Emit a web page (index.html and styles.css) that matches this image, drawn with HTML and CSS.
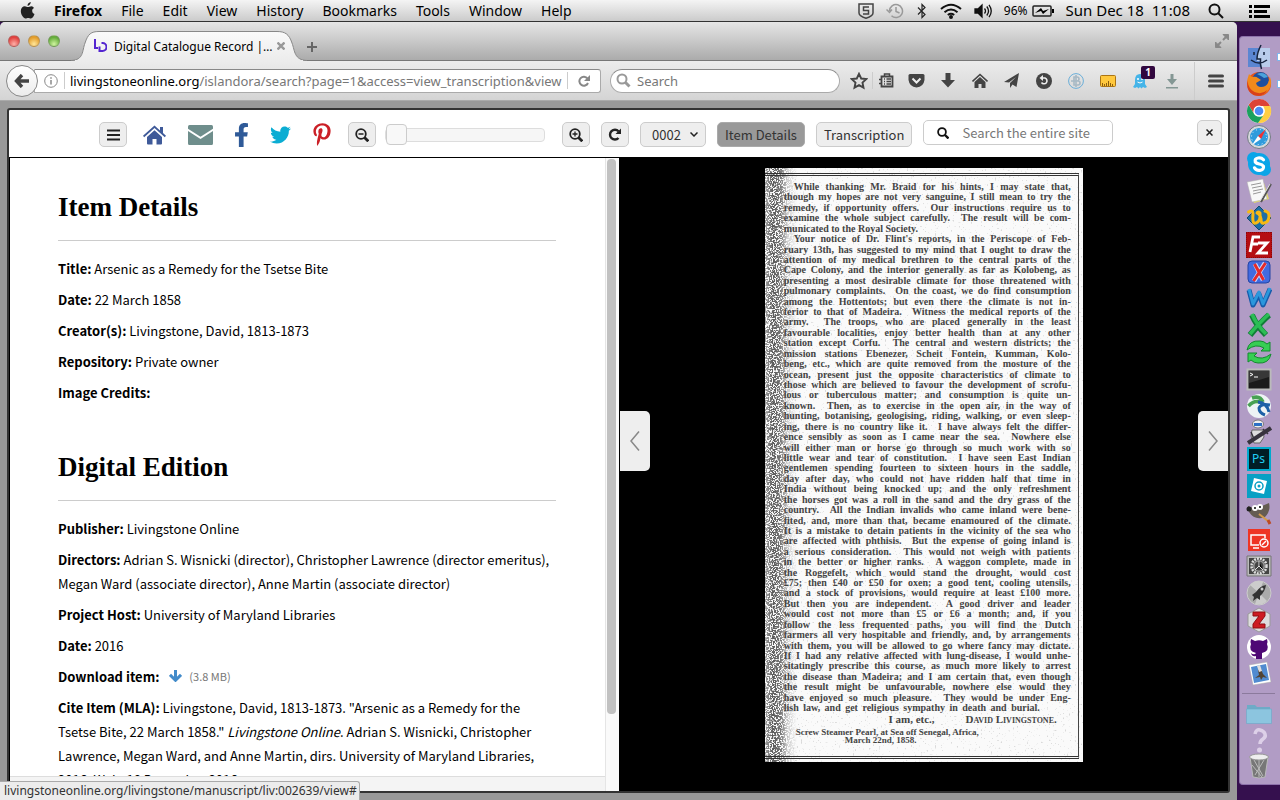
FILE: index.html
```html
<!DOCTYPE html>
<html lang="en">
<head>
<meta charset="utf-8">
<title>Digital Catalogue Record | Livingstone Online</title>
<link rel="stylesheet" href="styles.css">
</head>
<body>
<header class="menubar">
  <svg class="apple" viewBox="0 0 16 18" width="16" height="18"><path fill="#222" d="M10.8 0c.1 1.800-1.600 3.900-3.300 3.800C7.300 2 9.100.2 10.800 0zM13.900 6c-1.300.8-1.800 1.800-1.700 3 .1 1.500.9 2.500 2.300 3.100-.6 1.800-2 4.400-3.600 4.400-1 0-1.500-.6-2.700-.6s-1.800.6-2.700.6C3.500 16.500.8 12.500.8 9c0-3 2-4.700 4-4.700 1.300 0 2.300.8 3.200.8.8 0 2-.9 3.500-.9 1 .1 1.900.5 2.400 1.800z"/></svg>
  <nav class="menus">
    <a href="#" class="app">Firefox</a><a href="#">File</a><a href="#">Edit</a><a href="#">View</a><a href="#">History</a><a href="#">Bookmarks</a><a href="#">Tools</a><a href="#">Window</a><a href="#">Help</a>
  </nav>
  <div class="tray">
    <svg width="16" height="16" viewBox="0 0 16 16" fill="none" stroke="#444" stroke-width="1.500"><path d="M1 1h14v9q0 3-7 5.200Q1 13 1 10zM11 4H5.500v3.500h5V11H5"/></svg>
    <svg width="18" height="16" viewBox="0 0 18 16" fill="none" stroke="#999" stroke-width="1.500"><path d="M3.500 8a6.500 6.500 0 1 1 2 4.800M.5 6.500l3 3 2.500-3M10 4v4.500l3.500 1.500"/></svg>
    <svg width="12" height="16" viewBox="0 0 12 16" fill="none" stroke="#222" stroke-width="1.200"><path d="M2 4.500l7 7L6 14.500v-13l3 3-7 7"/></svg>
    <svg width="22" height="16" viewBox="0 0 22 16" fill="none" stroke="#111" stroke-width="2"><path d="M1 6q10-8.500 20 0M4.500 9.200q6.500-5.400 13 0M7.800 12q3.200-2.500 6.400 0"/><circle cx="11" cy="14" r="1" fill="#111"/></svg>
    <svg width="18" height="16" viewBox="0 0 18 16" fill="none" stroke="#111" stroke-width="1.300"><path fill="#111" d="M1 6h3l4-4v12l-4-4H1z"/><path d="M10.500 5.500q2 2.500 0 5M12.800 3.500q3.500 4.500 0 9M15 1.800q4.500 6.200 0 12.400"/></svg>
    <span class="charge">96%</span>
    <svg width="22" height="14" viewBox="0 0 22 14"><rect x="1" y="2" width="18" height="10" rx="1" fill="none" stroke="#222" stroke-width="1.500"/><path d="M20 5h2v4h-2z"/><path d="M3 9l6-5 2 3 6-2-6 5-2-3z"/></svg>
    <time class="clock">Sun Dec 18&nbsp; 11:08</time>
    <svg class="spot" width="16" height="16" viewBox="0 0 16 16" fill="none" stroke="#111" stroke-width="2"><circle cx="6.500" cy="6.500" r="5"/><path d="M10 10l5 5"/></svg>
    <svg width="21" height="14" viewBox="0 0 21 14"><path d="M0 1h3v3H0zM5 1h16v3H5zM0 6h3v3H0zM5 6h13v3H5zM0 11h3v3H0zM5 11h16v3H5z"/></svg>
  </div>
</header>

<div class="desktop">
<section class="window">
  <div class="titlebar">
    <div class="lights"><i class="red"></i><i class="amber"></i><i class="green"></i></div>
    <div class="tab">
      <svg class="tabshape" width="236" height="30" viewBox="0 0 236 30"><defs><linearGradient id="tb" x2="0" y2="1"><stop stop-color="#fafafa"/><stop offset="1" stop-color="#ececec"/></linearGradient></defs><path fill="url(#tb)" stroke="#888" d="M0 29.500C13 29 11 20 14 12 17 3 20 .5 28 .5H206C214 .5 218 3 221 12 224 20 223 29 236 29.500"/><path stroke="#ececec" stroke-width="2" d="M4 30H232"/></svg>
      <svg class="logo" width="14" height="14" viewBox="0 0 14 14" fill="none" stroke="#5426d0" stroke-width="2"><path d="M2 0v9h3M8.500 4h1a3.500 3.500 0 0 1 0 8H6.500V7.500"/></svg>
      <span class="tabtitle">Digital Catalogue Record |…</span>
      <button class="plain" aria-label="Close tab"><svg width="8" height="8" viewBox="0 0 8 8" stroke="#999" stroke-width="2.400"><path d="M.5.5l7 7M7.500.5l-7 7"/></svg></button>
    </div>
    <button class="plain newtab" aria-label="New tab"><svg width="10" height="10" viewBox="0 0 10 10" stroke="#666" stroke-width="2"><path d="M5 0v10M0 5h10"/></svg></button>
    <svg class="expand" width="14" height="14" viewBox="0 0 14 14" fill="#888" stroke="#888"><path d="M8 .5h5.500V6zM.5 8v5.500H6z"/><path stroke-width="2" d="M8 6l4-4M6 8l-4 4"/></svg>
  </div>

  <div class="toolbar">
    <button class="back" aria-label="Back"><svg width="16" height="14" viewBox="0 0 16 14" fill="none" stroke="#444" stroke-width="3.400"><path d="M8 1L2.500 7 8 13M3 7h12"/></svg></button>
    <div class="urlbox">
      <svg width="14" height="14" viewBox="0 0 14 14" fill="none" stroke="#888"><circle cx="7" cy="7" r="6.300"/><path stroke-width="1.500" d="M7 6v4.500M7 3.200v1.500"/></svg>
      <i class="sep"></i>
      <div class="url"><b>livingstoneonline.org</b>/islandora/search?page=1&amp;access=view_transcription&amp;view</div>
      <i class="sep"></i>
      <button class="plain reload" aria-label="Reload"><svg width="12" height="12" viewBox="0 0 12 12" fill="none" stroke="#888" stroke-width="2"><path d="M9.500 3.500A4.500 4.500 0 1 0 10 8"/><path fill="#888" stroke="none" d="M12 0v6H6z"/></svg></button>
    </div>
    <label class="searchbox"><svg width="15" height="15" viewBox="0 0 15 15" fill="none" stroke="#999" stroke-width="2"><circle cx="6" cy="6" r="4.500"/><path stroke-width="3" d="M9.500 9.500l4 4"/></svg><input type="text" placeholder="Search" aria-label="Search"></label>
    <div class="tools">
      <button class="plain star" aria-label="Bookmark"><svg width="18" height="18" viewBox="0 0 18 18" fill="none" stroke="#444" stroke-width="1.900"><path d="M9 1.800l2.200 4.700 5 .6-3.700 3.500 1 5.100L9 13.200l-4.500 2.500 1-5.100L1.800 7.100l5-.6z"/></svg></button>
      <i class="sep"></i>
      <button class="plain list" aria-label="Bookmarks"><svg width="15" height="15" viewBox="0 0 15 15" fill="none" stroke="#444"><path stroke-width="1.800" d="M2.500 3.500h11v10h-11z"/><path stroke-width="1.500" d="M5.500 3V1h5v2M0 6.500h3M0 10.500h3M5 6h1M7.500 6H12M5 8.500h1M7.500 8.500H12M5 11h1M7.500 11H12"/></svg></button>
      <button class="plain" aria-label="Pocket"><svg width="17" height="16" viewBox="0 0 17 16"><path fill="#444" d="M2 1h13q1.500 0 1.500 1.500V7q-1 7-8 7.500Q1.500 14 .5 7V2.500Q.5 1 2 1z"/><path d="M4.500 5.500l4 4 4-4" fill="none" stroke="#eee" stroke-width="2"/></svg></button>
      <button class="plain" aria-label="Downloads"><svg width="14" height="15" viewBox="0 0 14 15"><path fill="#444" d="M4.500 0h5v7H14l-7 7.500L0 7h4.500z"/></svg></button>
      <button class="plain" aria-label="Home"><svg width="16" height="16" viewBox="0 0 16 16"><path fill="#444" d="M8 4l5.500 5v6H9.500v-4h-3v4h-4V9z"/><path fill="none" stroke="#444" stroke-width="1.600" d="M.5 8.500L8 1.500l7.500 7"/></svg></button>
      <button class="plain" aria-label="Share"><svg width="16" height="16" viewBox="0 0 16 16"><path fill="#444" d="M15 0l-2.500 14-4-2.500L6 15v-5l6-6-7 5.500L0 9z"/></svg></button>
      <button class="plain" aria-label="History"><svg width="16" height="16" viewBox="0 0 16 16"><circle cx="8" cy="8" r="8" fill="#444"/><path fill="none" stroke="#eee" stroke-width="1.600" d="M5.500 5H9a3 3 0 1 1-3.500 4.500"/><path fill="#eee" d="M3.500 5L7 2v6z"/></svg></button>
      <button class="plain" aria-label="Translate"><svg width="16" height="16" viewBox="0 0 16 16" fill="none" stroke="#6aaed8"><circle cx="8" cy="8" r="7.400"/><path stroke="#a7b9c5" stroke-width="1.600" d="M6 4h3q2 0 2 2T9 8H3h7q2 0 2 2t-2 2H6zM8 2v12"/></svg></button>
      <button class="plain" aria-label="Ruler"><svg width="16" height="12" viewBox="0 0 16 12"><rect x=".5" y=".5" width="15" height="11" rx="1" fill="#ffc83d" stroke="#ab7414"/><path stroke="#8c5d0d" d="M2.500 11V8M4.500 11V9M6.500 11V8M8.500 11V6M10.500 11V8M12.500 11V9"/></svg></button>
      <button class="plain ghost" aria-label="Ghostery"><svg width="14" height="16" viewBox="0 0 14 16"><path fill="#45b4e8" d="M7 1q5 0 5 6v4l2 3-2 1-2-1-1.500 1.500L7 14l-1.500 1.500L4 14l-2 1-2-1 2-3V7q0-6 5-6z"/><circle cx="5" cy="6" r="1" fill="#fff"/><circle cx="9" cy="6" r="1" fill="#fff"/><path d="M4.500 9q2.500 2 5 0" stroke="#fff" fill="none"/></svg><span class="badge">1</span></button>
      <button class="plain" aria-label="Save"><svg width="14" height="16" viewBox="0 0 14 16"><path fill="#849794" d="M5.500 1h3v5H12l-5 6-5-6h3.500zM1 14h12v1.500H1z"/></svg></button>
      <i class="sep end"></i>
      <button class="plain burger" aria-label="Menu"><svg width="16" height="14" viewBox="0 0 16 14" stroke="#444" stroke-width="3" stroke-linecap="round"><path d="M1.500 2h13M1.500 7h13M1.500 12h13"/></svg></button>
    </div>
  </div>

  <div class="viewport">
  <main class="viewer">
    <div class="controls">
      <button class="btn" aria-label="Menu"><svg width="13" height="12" viewBox="0 0 13 12" stroke="#222" stroke-width="2"><path d="M0 1.500h13M0 6h13M0 10.500h13"/></svg></button>
      <div class="social">
        <a href="#" aria-label="Home"><svg width="23" height="20" viewBox="0 0 23 20" fill="#3f5a99"><path d="M11.500 5.200L4 12v6.500q0 1 1 1h4.500V14h4v5.500H18q1 0 1-1V12z"/><path d="M11.500.5L17 5.500V2h3v6l3 2.800-1.200 1.400L11.500 3 1.200 12.200 0 10.800z"/></svg></a>
        <a href="#" aria-label="Email"><svg width="25" height="20" viewBox="0 0 25 20" fill="#6f8e8c"><path d="M1.500 0h22Q25 0 25 1.500v2.200l-12.500 8L0 3.700V1.500Q0 0 1.500 0z"/><path d="M0 6l12.500 8L25 6v12.500q0 1.500-1.500 1.500h-22Q0 20 0 18.500z"/></svg></a>
        <a href="#" aria-label="Facebook"><svg width="13" height="24" viewBox="22 0 276 512" preserveAspectRatio="none"><path fill="#2f5a98" d="M279.140 288l14.220-92.660h-88.910v-60.130c0-25.350 12.420-50.060 52.240-50.060h40.420V6.260S260.430 0 225.360 0c-73.220 0-121.080 44.380-121.080 124.720v70.620H22.890V288h81.390v224h100.170V288z"/></svg></a>
        <a href="#" aria-label="Twitter"><svg width="21" height="20" viewBox="0 40 512 432"><path fill="#0badd3" d="M459.370 151.716c.325 4.548.325 9.097.325 13.645 0 138.720-105.583 298.558-298.558 298.558-59.452 0-114.680-17.219-161.137-47.106 8.447.974 16.568 1.299 25.340 1.299 49.055 0 94.213-16.568 130.274-44.832-46.132-.975-84.792-31.188-98.112-72.772 6.498.974 12.995 1.624 19.818 1.624 9.421 0 18.843-1.300 27.614-3.573-48.081-9.747-84.143-51.980-84.143-102.985v-1.299c13.969 7.797 30.214 12.670 47.431 13.319-28.264-18.843-46.781-51.005-46.781-87.391 0-19.492 5.197-37.360 14.294-52.954 51.655 63.675 129.300 105.258 216.365 109.807-1.624-7.797-2.599-15.918-2.599-24.040 0-57.828 46.782-104.934 104.934-104.934 30.213 0 57.502 12.670 76.670 33.137 23.715-4.548 46.456-13.320 66.599-25.340-7.798 24.366-24.366 44.833-46.132 57.827 21.117-2.273 41.584-8.122 60.426-16.243-14.292 20.791-32.161 39.308-52.628 54.253z"/></svg></a>
        <a href="#" aria-label="Pinterest"><svg width="18" height="23" viewBox="0 0 384 512"><path fill="#cb2027" d="M204 6.500C101.400 6.500 0 74.900 0 185.600 0 256 39.600 296 63.600 296c9.900 0 15.600-27.600 15.600-35.400 0-9.300-23.700-29.100-23.700-67.800 0-80.400 61.200-137.400 140.400-137.400 68.100 0 118.500 38.700 118.500 109.800 0 53.100-21.300 152.700-90.300 152.700-24.900 0-46.200-18-46.200-43.800 0-37.800 26.400-74.400 26.400-113.400 0-66.200-93.900-54.200-93.900 25.800 0 16.800 2.100 35.400 9.600 50.700-13.800 59.400-42 147.900-42 209.100 0 18.900 2.700 37.500 4.500 56.400 3.400 3.800 1.700 3.400 6.900 1.500 50.400-69 48.600-82.500 71.400-172.800 12.300 23.400 44.100 36 69.300 36 106.200 0 153.900-103.500 153.900-196.800C384 71.300 298.200 6.500 204 6.500z"/></svg></a>
      </div>
      <div class="zoomer">
        <button class="btn" aria-label="Zoom out"><svg width="14" height="14" viewBox="0 0 14 14" fill="none" stroke="#222" stroke-width="1.800"><circle cx="6" cy="6" r="4.800"/><path stroke-width="2.800" d="M9.500 9.500l3.800 3.800"/><path stroke-width="1.300" d="M3.500 6h5"/></svg></button>
        <input class="slider" type="range" min="0" max="100" value="0" aria-label="Zoom level">
      </div>
      <div class="pager">
        <button class="btn" aria-label="Zoom in"><svg width="14" height="14" viewBox="0 0 14 14" fill="none" stroke="#222" stroke-width="1.800"><circle cx="6" cy="6" r="4.800"/><path stroke-width="2.800" d="M9.500 9.500l3.800 3.800"/><path stroke-width="1.300" d="M3.500 6h5M6 3.500v5"/></svg></button>
        <button class="btn" aria-label="Rotate"><svg width="14" height="13" viewBox="0 0 14 13" fill="none" stroke="#222" stroke-width="2.400"><path d="M10.500 3.300A4.900 4.900 0 1 0 10.500 10"/><path fill="#222" stroke="none" d="M13 .5v5.500H7.500z"/></svg></button>
        <div class="pick"><select aria-label="Page"><option>0002</option></select><svg width="8" height="5" viewBox="0 0 8 5" fill="none" stroke="#222" stroke-width="1.500"><path d="M.5.5L4 4 7.500.5"/></svg></div>
        <button class="btn word on">Item Details</button>
        <button class="btn word">Transcription</button>
      </div>
      <label class="sitesearch"><svg width="12" height="12" viewBox="0 0 12 12" fill="none" stroke="#111" stroke-width="1.800"><circle cx="5" cy="5" r="3.900"/><path stroke-width="2.400" d="M8 8l3.500 3.500"/></svg><input type="text" placeholder="Search the entire site" aria-label="Search the entire site"></label>
      <button class="btn close" aria-label="Close"><svg width="7" height="7" viewBox="0 0 7 7" stroke="#222" stroke-width="1.500"><path d="M.5.5l6 6M6.500.5l-6 6"/></svg></button>
    </div>
    <div class="panes">
      <div class="details">
        <div class="scroller">
          <section>
            <h2>Item Details</h2>
            <p><b>Title:</b> Arsenic as a Remedy for the Tsetse Bite</p>
            <p><b>Date:</b> 22 March 1858</p>
            <p><b>Creator(s):</b> Livingstone, David, 1813-1873</p>
            <p><b>Repository:</b> Private owner</p>
            <p><b>Image Credits:</b></p>
          </section>
          <section>
            <h2>Digital Edition</h2>
            <p><b>Publisher:</b> Livingstone Online</p>
            <p><b>Directors:</b> Adrian S. Wisnicki (director), Christopher Lawrence (director emeritus), Megan Ward (associate director), Anne Martin (associate director)</p>
            <p><b>Project Host:</b> University of Maryland Libraries</p>
            <p><b>Date:</b> 2016</p>
            <p><b>Download item:</b> <a class="dl" href="#"><svg width="13" height="12" viewBox="0 0 13 12" fill="none" stroke="#428bca" stroke-width="3"><path d="M6.500 0v10M1 4.800l5.500 5.500L12 4.800"/></svg><span>(3.8 MB)</span></a></p>
            <p><b>Cite Item (MLA):</b> Livingstone, David, 1813-1873. "Arsenic as a Remedy for the Tsetse Bite, 22 March 1858." <em>Livingstone Online</em>. Adrian S. Wisnicki, Christopher Lawrence, Megan Ward, and Anne Martin, dirs. University of Maryland Libraries, 2016. Web. 18 December 2016.</p>
          </section>
        </div>
        <div class="track"><i></i></div>
      </div>
      <div class="stage">
        <button class="turn prev" aria-label="Previous page"><svg width="10" height="20" viewBox="0 0 10 20" fill="none" stroke="#888" stroke-width="1.500"><path d="M9 .5L1 10l8 9.500"/></svg></button>
        <article class="scan">
          <svg class="grain" aria-hidden="true"><defs>
            <filter id="speck" x="0" y="0" width="1" height="1"><feTurbulence type="fractalNoise" baseFrequency=".7" numOctaves="2" seed="4"/><feColorMatrix values="0 0 0 0 .1  0 0 0 0 .1  0 0 0 0 .1  10 0 0 0 -4.200"/></filter>
            <filter id="dust" x="0" y="0" width="1" height="1"><feTurbulence type="fractalNoise" baseFrequency=".5" numOctaves="2" seed="9"/><feColorMatrix values="0 0 0 0 .4  0 0 0 0 .4  0 0 0 0 .4  10 0 0 0 -6.600"/></filter>
            <linearGradient id="fade"><stop stop-color="#888"/><stop offset=".25" stop-color="#fff"/><stop offset=".5" stop-color="#ccc"/><stop offset=".7" stop-color="#444"/><stop offset="1" stop-color="#000"/></linearGradient>
            <mask id="edge" maskUnits="userSpaceOnUse" x="0" y="0" width="32" height="2000"><rect width="32" height="2000" fill="url(#fade)"/></mask>
          </defs>
            <rect width="100%" height="100%" filter="url(#dust)" opacity=".4"/>
            <g mask="url(#edge)"><rect width="32" height="100%" filter="url(#speck)"/></g>
          </svg>
          <div class="print">
            <p class="in">While thanking Mr. Braid for his hints, I may state that,</p>
            <p>though my hopes are not very sanguine, I still mean to try the</p>
            <p>remedy, if opportunity offers. &nbsp;Our instructions require us to</p>
            <p>examine the whole subject carefully. &nbsp;The result will be com-</p>
            <p class="short">municated to the Royal Society.</p>
            <p class="in">Your notice of Dr. Flint's reports, in the Periscope of Feb-</p>
            <p>ruary 13th, has suggested to my mind that I ought to draw the</p>
            <p>attention of my medical brethren to the central parts of the</p>
            <p>Cape Colony, and the interior generally as far as Kolobeng, as</p>
            <p>presenting a most desirable climate for those threatened with</p>
            <p>pulmonary complaints. &nbsp;On the coast, we do find consumption</p>
            <p>among the Hottentots; but even there the climate is not in-</p>
            <p>ferior to that of Madeira. &nbsp;Witness the medical reports of the</p>
            <p>army. &nbsp;The troops, who are placed generally in the least</p>
            <p>favourable localities, enjoy better health than at any other</p>
            <p>station except Corfu. &nbsp;The central and western districts; the</p>
            <p>mission stations Ebenezer, Scheit Fontein, Kumman, Kolo-</p>
            <p>beng, etc., which are quite removed from the mosture of the</p>
            <p>ocean, present just the opposite characteristics of climate to</p>
            <p>those which are believed to favour the development of scrofu-</p>
            <p>lous or tuberculous matter; and consumption is quite un-</p>
            <p>known. &nbsp;Then, as to exercise in the open air, in the way of</p>
            <p>hunting, botanising, geologising, riding, walking, or even sleep-</p>
            <p>ing, there is no country like it. &nbsp;I have always felt the differ-</p>
            <p>ence sensibly as soon as I came near the sea. &nbsp;Nowhere else</p>
            <p>will either man or horse go through so much work with so</p>
            <p>little wear and tear of constitution. &nbsp;I have seen East Indian</p>
            <p>gentlemen spending fourteen to sixteen hours in the saddle,</p>
            <p>day after day, who could not have ridden half that time in</p>
            <p>India without being knocked up; and the only refreshment</p>
            <p>the horses got was a roll in the sand and the dry grass of the</p>
            <p>country. &nbsp;All the Indian invalids who came inland were bene-</p>
            <p>fited, and, more than that, became enamoured of the climate.</p>
            <p>It is a mistake to detain patients in the vicinity of the sea who</p>
            <p>are affected with phthisis. &nbsp;But the expense of going inland is</p>
            <p>a serious consideration. &nbsp;This would not weigh with patients</p>
            <p>in the better or higher ranks. &nbsp;A waggon complete, made in</p>
            <p>the Roggefelt, which would stand the drought, would cost</p>
            <p>£75; then £40 or £50 for oxen; a good tent, cooling utensils,</p>
            <p>and a stock of provisions, would require at least £100 more.</p>
            <p>But then you are independent. &nbsp;A good driver and leader</p>
            <p>would cost not more than £5 or £6 a month; and, if you</p>
            <p>follow the less frequented paths, you will find the Dutch</p>
            <p>farmers all very hospitable and friendly, and, by arrangements</p>
            <p>with them, you will be allowed to go where fancy may dictate.</p>
            <p>If I had any relative affected with lung-disease, I would unhe-</p>
            <p>sitatingly prescribe this course, as much more likely to arrest</p>
            <p>the disease than Madeira; and I am certain that, even though</p>
            <p>the result might be unfavourable, nowhere else would they</p>
            <p>have enjoyed so much pleasure. &nbsp;They would be under Eng-</p>
            <p class="short wide">lish law, and get religious sympathy in death and burial.</p>
            <p class="sign"><span>I am, etc.,</span><span class="caps">David Livingstone.</span></p>
            <p class="place">Screw Steamer Pearl, at Sea off Senegal, Africa,</p>
            <p class="date">March 22nd, 1858.</p>
          </div>
        </article>
        <button class="turn next" aria-label="Next page"><svg width="10" height="20" viewBox="0 0 10 20" fill="none" stroke="#888" stroke-width="1.500"><path d="M1 .5L9 10l-8 9.500"/></svg></button>
      </div>
    </div>
  </main>
  </div>
  <div class="status">livingstoneonline.org/livingstone/manuscript/liv:002639/view#</div>
</section>

<aside class="dock">
  <div class="apps">
    <svg viewBox="0 0 26 26"><rect x="2" y="4" width="22" height="19" fill="#5b86d2"/><path fill="#b9cdec" d="M14 4h10v19H15l-1-6h-3q0-8 3-13z"/><path fill="none" stroke="#16243f" stroke-width="1.500" d="M15 1q-4 8-4 14h3.500q-.5 6 1 10M5 16q8 6 16 0M8 8v3M18 8v3"/></svg>
    <svg viewBox="0 0 26 26"><circle cx="13" cy="13" r="12" fill="#e8541a"/><circle cx="14.500" cy="9.500" r="8.500" fill="#1d4f9f"/><path fill="#4aa2dc" d="M11 3q7-3 11 3l-4 1-3-2z"/><path fill="#f08a1c" d="M1.500 8L3 3l3 3q4-1 6 1l3 2-5 3q1 4 5 4 5 0 7-4l2-6q3 8-2 14-6 6-14 3Q0 19 1.500 8z"/><path fill="#d9401a" d="M1.500 10q1 8 7 11 7 3 13-2-5 8-14 5Q0 20 1.500 10z"/></svg>
    <svg viewBox="0 0 26 26"><circle cx="13" cy="13" r="12" fill="#fff"/><path fill="#dd4336" d="M2.600 7A12 12 0 0 1 24 8H13a6 6 0 0 0-5.500 7z"/><path fill="#ffce43" d="M24 8a12 12 0 0 1-12 17l6-9q2-4-1-8z"/><path fill="#1aa15e" d="M2.600 7A12 12 0 0 0 12 25l5-7q-7 2-9.500-3z"/><circle cx="13" cy="13" r="5.500" fill="#fff"/><circle cx="13" cy="13" r="4.300" fill="#4c8bf5"/></svg>
    <svg viewBox="0 0 26 26"><circle cx="13" cy="13" r="11.500" fill="#d5d8dc" stroke="#737b83"/><circle cx="13" cy="13" r="9" fill="#2f9bdc"/><circle cx="13" cy="13" r="7.500" fill="none" stroke="#e5f3fc" stroke-dasharray="1 3"/><path fill="#e33" d="M20 5l-5 10-3-3z"/><path fill="#fff" d="M6 21l6-9 3 3z"/></svg>
    <svg viewBox="0 0 26 26"><g fill="#0aa5e8"><circle cx="13" cy="13" r="11"/><circle cx="7.500" cy="7.500" r="6.500"/><circle cx="18.500" cy="18.500" r="6.500"/></g><path fill="none" stroke="#fff" stroke-width="3.200" stroke-linecap="round" d="M17.500 8.800Q15.500 6.500 12 7T9.300 11q1 1.500 4 2t4.200 2.300q.5 3.500-3.500 4t-5.500-2.500"/></svg>
    <svg viewBox="0 0 26 26"><path fill="#e5dc68" d="M3 9l15-4 5 16-15 4z"/><path fill="#f8f8f8" stroke="#aaa" stroke-width=".5" d="M1 4l16-3 4 20-15 3z"/><path stroke="#999" d="M5 7l10-2M6 10l10-2M7 13l10-2M7 16l8-2"/><path stroke="#555" stroke-width="2" d="M25 6L15 24"/><path stroke="#ddd" d="M24 6L14 23"/></svg>
    <svg viewBox="0 0 26 26"><path fill="#1d6fa5" stroke="#124a70" d="M13 1l12 12-12 12L1 13z"/><path fill="none" stroke="#f6b914" stroke-width="3" stroke-linecap="round" stroke-linejoin="round" d="M2.500 7Q7 4 7 9q-1 11 3 9 5-2 4-10-2-2-3 0 3 1 4 6 0 5 3 4 5-1 5-7 0-4-4-5"/></svg>
    <svg viewBox="0 0 26 26"><rect x="0" y="0" width="26" height="26" fill="#b50d12" stroke="#650000" stroke-dasharray="1 1"/><path fill="none" stroke="#fff" stroke-width="2.800" d="M14 5H7L4 20M5.500 12H12M12 11h9l-9 10h10"/></svg>
    <svg viewBox="0 0 26 26"><rect x="2" y="2" width="22" height="22" rx="4" fill="#416be0" stroke="#2445a4"/><path stroke="#c9d8ff" stroke-width="4.500" d="M9 5l8 16M19 4L8 22"/><path stroke="#e52a2a" stroke-width="3" d="M8.500 5l9 16M19.500 4L7.500 22"/></svg>
    <svg viewBox="0 0 26 26"><path fill="none" stroke="#155baa" stroke-width="5" stroke-linejoin="round" d="M3 5l4 15 6-11 4 11 7-16"/><path fill="none" stroke="#2b97dc" stroke-width="3" stroke-linejoin="round" d="M3 4l4 15 6-12 4 12 7-16"/></svg>
    <svg viewBox="0 0 26 26" fill="none"><path stroke="#117e38" stroke-width="6" d="M6 3q4 10 14 20M23 3Q15 10 4 23"/><path stroke="#2cbd55" stroke-width="3.500" d="M6 2q4 10 14 20M23 2Q15 9 4 22"/></svg>
    <svg viewBox="0 0 26 26" fill="#37ce53" stroke="#138b2f"><path d="M1 11Q3 1 14 2q4 0 7 3l3-2v9h-9l3-3q-8-5-17 2zM25 15q-2 10-13 9-4 0-7-3l-3 2v-9h9l-3 3q8 5 17-2z"/></svg>
    <svg viewBox="0 0 26 26"><rect x="1.500" y="3.500" width="23" height="20" fill="#1b1b1b" stroke="#bbb" stroke-width="2"/><path fill="#383838" d="M3 5h20v6L3 17z"/><path fill="none" stroke="#fff" d="M4 7l3 1.500L4 10M8 11h4"/></svg>
    <svg viewBox="0 0 26 26"><circle cx="13" cy="13" r="12" fill="#eef3f5"/><path fill="none" stroke="#48a153" stroke-width="3.500" d="M2.500 13Q8 7 14 9M6 5q8-3 11 4"/><path fill="none" stroke="#1d60a7" stroke-width="3" d="M12 9q9 1 11 10M24 12q-9-2-11 3 0 5 6 7"/></svg>
    <svg viewBox="0 0 26 26"><ellipse cx="12" cy="5" rx="5.500" ry="4" fill="#eee" stroke="#777"/><path fill="#2d70c4" d="M8 4h8v3H8z"/><path fill="#ddd" stroke="#666" d="M6 11h11l1 7-4 6H8l-3-7z"/><path stroke="#37333d" stroke-width="4" d="M2 24L25 9"/><path stroke="#37333d" stroke-width="1.500" d="M5 13l3 7M17 10l5 5"/></svg>
    <svg viewBox="0 0 26 26"><rect x="2" y="2" width="22" height="22" fill="#001d26" stroke="#00aacd" stroke-width="2"/><text x="6" y="17" class="ps">Ps</text></svg>
    <svg viewBox="0 0 26 26"><path fill="#07a0c4" d="M1 1h24v24H1z"/><path fill="#fff" d="M8 5l13 3-3 13-13-3z"/><circle cx="13" cy="13" r="4" fill="none" stroke="#07a0c4" stroke-width="1.500"/><circle cx="13" cy="13" r="1.500" fill="#07a0c4"/></svg>
    <svg viewBox="0 0 26 26"><path fill="#655c52" d="M2 6q8 4 14 0l7-3q2 8-4 14-10 4-16-5z"/><circle cx="9" cy="8" r="3" fill="#fff"/><circle cx="14" cy="7" r="3" fill="#fff"/><circle cx="9" cy="8" r="1"/><circle cx="14" cy="7" r="1"/><circle cx="3" cy="9" r="2.500" fill="#222"/><path stroke="#d39b4b" stroke-width="2" d="M13 14l9 7"/><path stroke="#bd4b24" stroke-width="3" d="M22 20l2 4"/></svg>
    <svg viewBox="0 0 26 26" fill="none" stroke="#fff" stroke-width="1.500"><path fill="#ee3524" stroke="none" d="M2 2h22v22H2z"/><path d="M13 18H5V8h14v3M7 21h6"/><circle cx="18" cy="16" r="4"/><path d="M16 18l4-4"/></svg>
    <svg viewBox="0 0 26 26"><path fill="#bbb" stroke="#777" d="M1 3h24v20H1z"/><path fill="#444" d="M3 5h20v16H3z"/><circle cx="13" cy="13" r="7.500" fill="none" stroke="#ddd" stroke-width="2.500" stroke-dasharray="2 1"/><circle cx="13" cy="13" r="6" fill="#999"/><circle cx="13" cy="13" r="4.500" fill="#444"/><path stroke="#ddd" d="M13 8v5l4 4M13 13l-4 4"/></svg>
    <svg viewBox="0 0 26 26"><circle cx="13" cy="13" r="12" fill="#aaa" stroke="#ccc"/><path fill="#ccc" d="M13 13L4 5q6-6 13-3zM13 13l8 8q-5 5-12 3z"/><path fill="#333" d="M20 5q-1 7-6 11v4l-3-2-4 3 1-4-2-2 4-3q4-6 10-7z"/><circle cx="16" cy="9" r="1.500" fill="#ccc"/></svg>
    <svg viewBox="0 0 26 26"><path fill="#ddd" stroke="#999" d="M13 1l11 6v12l-11 6-11-6V7z"/><path fill="#cd1c22" stroke="#8f0e12" d="M7 5h12v4l-6 8h6v4H7v-4l6-8H7z"/></svg>
    <svg viewBox="0 0 26 26"><circle cx="13" cy="13" r="12" fill="#fff"/><path fill="#4e0875" d="M5 5l4 2q4-1.500 8 0l4-2q1 3 0 5 3 7-5 9v6h-6v-3q-4 1-5-3 2 2 4 1l1-1q-8-2-5-9-1-2 0-5z"/></svg>
    <svg viewBox="0 0 26 26"><path fill="#fff" stroke="#aaa" stroke-width=".5" d="M3 4l18-3 4 20-18 3z"/><path fill="#508bd0" d="M5 6l15-3 3 16-15 3z"/><path fill="#514332" d="M12 9l3-1 2 5 4 4-4-1-2 3-1-3-5 1 4-3z"/><path fill="#ddd" d="M11 5l3-1 2 6-3 1z"/></svg>
  </div>
  <hr>
  <div class="places">
    <svg viewBox="0 0 26 26"><path fill="#6eabc7" d="M1 4h8l2 2h13v6H1z"/><path fill="#8cc5df" stroke="#6ba8c7" stroke-width=".6" d="M.500 8h25v14.500H.500z"/></svg>
    <svg viewBox="0 0 26 26"><path fill="none" stroke="#ddd0e8" stroke-width="3.500" d="M9 7q1-5 5-4t5 4-2 5-3 5"/><circle cx="13.500" cy="23" r="2.500" fill="#ddd0e8"/></svg>
    <svg viewBox="0 0 26 26"><path fill="#777" stroke="#bbb" d="M4 4h18l-3 20q-6 2-12 0z"/><path stroke="#bbb" d="M8 7l9 16M18 7L9 22M13 6v18M6 12l10 12"/><ellipse cx="13" cy="4" rx="9.500" ry="3" fill="#eee" stroke="#999"/></svg>
  </div>
  <i class="dot"></i><i class="dot second"></i>
</aside>
</div>
</body>
</html>
```
FILE: styles.css
```css
* { box-sizing: border-box; }
body {
  margin: 0; height: 100vh; overflow: hidden; display: flex; flex-direction: column;
  background: #35104e; color: #000; font: 13px "Noto Sans", sans-serif;
}
svg { display: block; flex: none; }
button, input, select { font: inherit; color: inherit; margin: 0; }
a { color: inherit; text-decoration: none; }
i { display: block; }

.menubar {
  flex: none; height: 22px; display: flex; align-items: center; padding: 0 10px 0 20px;
  background: linear-gradient(#f4f4f4, #cbcbcb); border-bottom: 1px solid #333; font-size: 14px; line-height: 21px;
}
.menus { display: flex; gap: 19px; margin-left: 18px; }
.app { font-weight: bold; }
.tray { margin-left: auto; display: flex; align-items: center; gap: 12px; }
.charge { font-size: 12px; margin-right: -8px; }
.clock { white-space: nowrap; font-size: 15px; }
.spot { margin: 0 13px 0 6px; }
.tray svg:last-child { margin-left: 0; }

.desktop { flex: 1; min-height: 0; display: flex; gap: 2px; }
.window { flex: 1; min-width: 0; display: flex; flex-direction: column; position: relative; background: #999; border-radius: 5px 5px 0 0; overflow: hidden; }
.titlebar {
  flex: none; height: 39px; display: flex; align-items: flex-end; padding: 0 8px 0 8px;
  background: linear-gradient(#e6e6e6, #ababab); border-bottom: 1px solid #777;
}
.lights { display: flex; gap: 8px; padding-bottom: 13px; }
.lights i { width: 12px; height: 12px; border-radius: 50%; border: 1px solid #7776; }
.red { background: radial-gradient(circle at 50% 80%, #ffb0a8, #e0423f 70%); }
.amber { background: radial-gradient(circle at 50% 80%, #ffe79a, #e39d2c 70%); }
.green { background: radial-gradient(circle at 50% 80%, #d0f5a0, #66ad3c 70%); }
.tab { position: relative; width: 236px; height: 30px; margin: 0 0 -1px 11px; display: flex; align-items: center; gap: 7px; padding-left: 22px; font-size: 12px; }
.tabshape { position: absolute; left: 0; top: 0; }
.logo, .tabtitle, .tab button { position: relative; }
.tabtitle { width: 156px; white-space: nowrap; }
.plain { background: none; border: 0; padding: 0; display: flex; align-items: center; justify-content: center; }
.newtab { padding-bottom: 8px; }
.expand { margin-left: auto; margin-bottom: 12px; }

.toolbar { flex: none; height: 40px; display: flex; align-items: center; padding: 0 6px; background: linear-gradient(#ececec, #d4d4d4); border-bottom: 1px solid #aaa; }
.back { position: relative; z-index: 1; width: 32px; height: 32px; border-radius: 50%; border: 1px solid #888; background: linear-gradient(#fff, #ececec); padding: 0; display: flex; align-items: center; justify-content: center; }
.urlbox { flex: 1; min-width: 0; height: 24px; margin-left: -4px; padding-left: 9px; display: flex; align-items: center; border: 1px solid #aaa; border-top-color: #888; border-radius: 0 3px 3px 0; background: #fff; }
.sep { width: 1px; height: 17px; background: #ccc; flex: none; }
.urlbox svg + .sep { margin: 0 5px 0 6px; }
.url { flex: 1; min-width: 0; overflow: hidden; white-space: nowrap; color: #777; }
.url b { font-weight: normal; color: #000; }
.reload { width: 32px; }
.searchbox { width: 230px; height: 24px; margin-left: 9px; padding-left: 5px; display: flex; align-items: center; gap: 6px; border: 1px solid #aaa; border-top-color: #888; border-radius: 12px; background: #fff; }
.searchbox input { width: 190px; border: 0; outline: 0; padding: 0; background: none; }
.searchbox input::placeholder { color: #777; }
.tools { display: flex; align-items: center; margin-left: 9px; }
.tools .plain { width: 32px; height: 24px; }
.tools .star { width: 20px; }
.tools .list { width: 27px; }
.sep.end { height: 38px; margin-left: 6px; }
.tools .burger { width: 30px; margin-left: 6px; }
.star + .sep { margin-left: 3px; }
.ghost { position: relative; }
.badge { position: absolute; left: 17px; top: -3px; width: 14px; height: 13px; border-radius: 2px; background: #32083f; color: #fff; font: bold 10px/13px "Noto Sans", sans-serif; text-align: center; }

.viewport { flex: 1; min-height: 0; padding: 7px; display: flex; }
.viewer {
  flex: 1; min-width: 0; display: flex; flex-direction: column; border: 2px solid #333; border-radius: 3px; background: #fff;
  font: 13px/20px "Noto Sans CJK SC", sans-serif; color: #000;
}
.controls { flex: none; height: 48px; display: flex; align-items: center; padding: 2px 5px 0 90px; border-bottom: 1px solid #000; }
.btn {
  height: 25px; min-width: 28px; padding: 0 6px; display: flex; align-items: center; justify-content: center;
  border: 1px solid #ccc; border-radius: 5px; background: #eee; color: #333; line-height: 20px; white-space: nowrap;
}
.btn.word { padding: 0 7px; }
.btn.on { background: #999; border-color: #aaa; }
.social { display: flex; align-items: center; gap: 22px; margin: 0 17px 0 16px; }
.zoomer { display: flex; align-items: center; gap: 9px; margin-right: 17px; }
.slider { appearance: none; width: 160px; height: 14px; border: 1px solid #ddd; border-radius: 4px; background: #f6f6f6; }
.slider::-webkit-slider-thumb { appearance: none; width: 21px; height: 21px; border: 1px solid #ccc; border-radius: 4px; background: #f8f8f8; }
.pager { display: flex; align-items: center; gap: 11px; }
.pick { position: relative; }
.pick select { appearance: none; display: block; width: 66px; height: 25px; padding: 0 0 0 11px; border: 1px solid #ccc; border-radius: 5px; background: #eee; color: #333; }
.pick svg { position: absolute; right: 8px; top: 10px; pointer-events: none; }
.sitesearch { width: 190px; height: 25px; margin: 0 11px 4px; padding-left: 13px; display: flex; align-items: center; gap: 13px; border: 1px solid #ccc; border-radius: 5px; }
.sitesearch input { width: 148px; border: 0; outline: 0; padding: 0; background: none; }
.sitesearch input::placeholder { color: #777; }
.close { min-width: 25px; margin: 0 1px 4px auto; }

.panes { flex: 1; min-height: 0; display: grid; grid-template-columns: 1fr 1fr; }
.details { min-height: 0; display: flex; border-left: 1px solid #000; background: #f4f4f4; }
.scroller { flex: 1; min-width: 0; margin-bottom: 14px; padding: 30px 49px 0 48px; overflow: hidden; background: #fff; border-bottom: 1px solid #ddd; }
.track { flex: none; width: 14px; background: #fafafa; border-left: 1px solid #e5e5e5; padding: 1px; }
.track i { width: 9px; height: 88%; border-radius: 4px; background: #c1c1c1; }
.details section { margin-bottom: 43px; }
.details h2 { margin: 0 0 16px; padding-bottom: 14px; border-bottom: 1px solid #ccc; font: bold 27px/38px "Liberation Serif", serif; }
.details p { margin: 0 0 7px; line-height: 24px; }
.dl { display: inline-flex; align-items: center; gap: 7px; margin-left: 7px; color: #777; font-size: 11px; line-height: 20px; }

.stage { position: relative; min-height: 0; background: #000; display: flex; justify-content: center; padding: 10px 0 29px 1px; }
.turn { position: absolute; top: 253px; width: 30px; height: 60px; border: 0; padding: 0; display: flex; align-items: center; justify-content: center; background: #eee; }
.prev { left: 1px; border-radius: 0 5px 5px 0; }
.next { right: 0; border-radius: 5px 0 0 5px; }
.scan { position: relative; width: 318px; height: 100%; background: #fafafa; overflow: hidden; padding: 5px 4px 3px 0; }
.grain { position: absolute; left: 0; top: 0; width: 100%; height: 100%; }
.print {
  position: relative; height: 100%; display: flex; flex-direction: column; padding: 6px 7px 10px 19px;
  border-top: 3px double #333; border-right: 1px solid #444; border-bottom: 3px double #333;
  font: bold 10px/10px "Liberation Serif", serif; color: #444;
}
.print p { margin: 0; flex: 1; min-height: 0; text-align: justify; text-align-last: justify; white-space: nowrap; }
.print .in { padding-left: 10px; }
.print .short { text-align-last: left; }
.print .wide { text-align-last: justify; padding-right: 31px; }
.print .sign { display: flex; justify-content: flex-end; gap: 31px; padding-right: 14px; font-size: 11px; }
.caps { font-variant: small-caps; }
.print .place, .print .date { font-size: 9px; text-align-last: left; padding-left: 12px; }
.print .place { margin-top: 3px; }
.print .date { padding-left: 61px; margin-top: -2px; }

.status { position: absolute; left: 0; bottom: 0; height: 19px; padding: 0 2px 0 4px; border: 1px solid #aaa; border-left: 0; border-bottom: 0; border-radius: 0 3px 0 0; background: #ececec; color: #333; font-size: 12px; line-height: 18px; }

.dock { position: relative; flex: none; width: 41px; margin: 14px 0 15px; padding: 7px 8px 5px 6px; display: flex; flex-direction: column; background: #b19cc5; border: 1px solid #8e72ab; border-right: 0; border-radius: 4px 0 0 4px; }
.apps { flex: 1; min-height: 0; display: flex; flex-direction: column; justify-content: space-between; }
.dock svg { width: 26px; height: 26px; }
.dock hr { width: 33px; margin: 6px -4px 7px; border: 0; border-top: 1px solid #8b7a9c; }
.dot { position: absolute; right: 0; top: 16px; width: 3px; height: 8px; border: 1px solid #7fb5ec; border-right: 0; background: #fff; }
.dot.second { top: 43px; }
.ps { font: 12px "Noto Sans", sans-serif; fill: #20cdf3; }
```
